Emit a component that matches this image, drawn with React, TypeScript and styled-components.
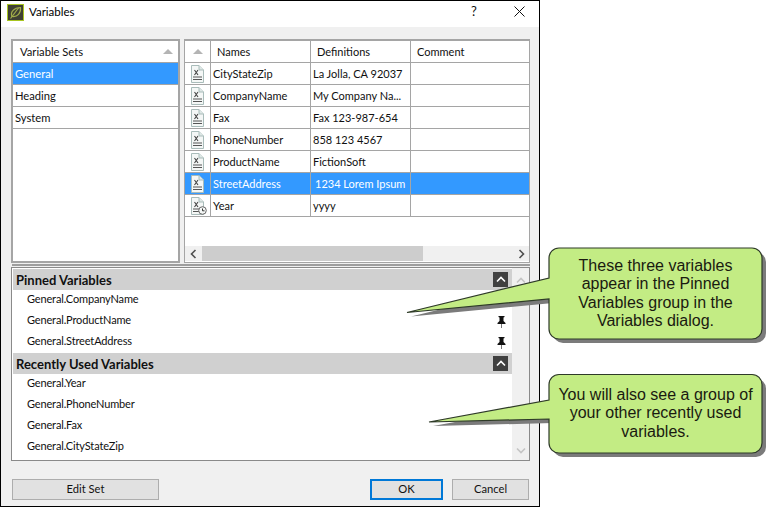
import React from 'react';
import styled, { createGlobalStyle } from 'styled-components';

const GlobalStyle = createGlobalStyle`
  html, body {
    margin: 0;
    padding: 0;
    background: #ffffff;
  }
  #root {
    width: 777px;
    height: 507px;
    overflow: hidden;
  }
  * {
    box-sizing: border-box;
  }
`;

const uiFont = 'Lato, Roboto, sans-serif';
const lineColor = '#a5a5a5';
const selectedColor = '#3399ff';

const Page = styled.div`
  position: relative;
  width: 777px;
  height: 507px;
  background: #ffffff;
  font-family: ${uiFont};
  font-size: 11.2px;
  color: #101010;
`;

const Window = styled.div`
  width: 540px;
  height: 507px;
  border: 1px solid #000000;
  display: flex;
  flex-direction: column;
  background: #f0f0f0;
`;

const TitleBar = styled.div`
  height: 26px;
  flex: none;
  background: #ffffff;
  display: flex;
  align-items: center;
  padding: 0 0 4px 6px;
`;

const TitleText = styled.span`
  margin: 0 0 2px 5px;
  font-size: 11.5px;
  color: #000000;
  flex: 1;
`;

const TitleButton = styled.span<{ $width: number }>`
  width: ${(props) => props.$width}px;
  margin-bottom: 2px;
  display: flex;
  justify-content: center;
  align-items: center;
  font-size: 13px;
  color: #111111;
`;

const Body = styled.div`
  flex: 1;
  display: flex;
  flex-direction: column;
  padding: 12px 9px 0 10px;
`;

const TopRow = styled.div`
  height: 224px;
  flex: none;
  display: flex;
  gap: 4px;
`;

const Panel = styled.div<{ $width: number; $thinSides?: boolean }>`
  width: ${(props) => props.$width}px;
  flex: none;
  border: 2px solid ${lineColor};
  border-left-width: ${(props) => (props.$thinSides ? 1 : 2)}px;
  border-right-width: ${(props) => (props.$thinSides ? 1 : 2)}px;
  border-bottom-width: ${(props) => (props.$thinSides ? 1 : 2)}px;
  background: #ffffff;
  display: flex;
  flex-direction: column;
`;

const SetsHeader = styled.div`
  height: 22px;
  flex: none;
  display: flex;
  align-items: center;
  justify-content: space-between;
  padding: 0 5px 0 7px;
  border-bottom: 1px solid ${lineColor};
`;

const SortArrow = styled.span`
  width: 0;
  height: 0;
  border-left: 5px solid transparent;
  border-right: 5px solid transparent;
  border-bottom: 5px solid #b4b4b4;
`;

const SetRow = styled.div<{ $selected?: boolean }>`
  height: 22px;
  flex: none;
  display: flex;
  align-items: center;
  padding-left: 2px;
  border-bottom: 1px solid ${lineColor};
  background: ${(props) => (props.$selected ? selectedColor : '#ffffff')};
  color: ${(props) => (props.$selected ? '#ffffff' : '#101010')};
`;

const TableRow = styled.div<{ $selected?: boolean }>`
  height: 22px;
  flex: none;
  display: grid;
  grid-template-columns: 26px 100px 100px 1fr;
  font-size: 11px;
  border-bottom: 1px solid ${lineColor};
  background: ${(props) => (props.$selected ? selectedColor : '#ffffff')};
  color: ${(props) => (props.$selected ? '#ffffff' : '#101010')};
`;

const Cell = styled.div<{ $inset?: number }>`
  display: flex;
  align-items: center;
  min-width: 0;
  white-space: nowrap;
  overflow: hidden;
  padding-left: ${(props) => props.$inset ?? 2}px;
  border-right: 1px solid ${lineColor};
  &:last-child {
    border-right: none;
  }
`;

const IconCell = styled(Cell)`
  justify-content: center;
  padding-left: 1px;
`;

const TableSpacer = styled.div`
  flex: 1;
`;

const HScrollBar = styled.div`
  height: 15px;
  flex: none;
  margin-bottom: 1px;
  background: #f0f0f0;
  display: flex;
  align-items: center;
`;

const ScrollArrow = styled.span`
  width: 17px;
  height: 15px;
  flex: none;
  display: flex;
  align-items: center;
  justify-content: center;
`;

const HScrollTrack = styled.div`
  flex: 1;
  height: 15px;
`;

const HScrollThumb = styled.div`
  width: 221px;
  height: 15px;
  background: #cdcdcd;
`;

const Splitter = styled.div`
  height: 4px;
  flex: none;
  margin: 0 0 0 1px;
  padding: 0.5px 0;
  background-image: repeating-conic-gradient(#3c3c3c 0 25%, #ffffff 0 50%);
  background-size: 2px 2px;
  background-clip: content-box;
  border-bottom: 1px solid #f0f0f0;
`;

const LowerPanel = styled.div`
  height: 194px;
  flex: none;
  border: 1px solid #8a8a8a;
  background: #ffffff;
  display: flex;
`;

const GroupList = styled.div`
  flex: 1;
  padding: 1px 0 0 1px;
  min-width: 0;
`;

const GroupHeader = styled.div`
  height: 21px;
  background: #d0d0d0;
  display: flex;
  align-items: center;
  justify-content: space-between;
  padding: 0 4px 0 3px;
  font-weight: 700;
  font-size: 13px;
  color: #111111;
`;

const CollapseButton = styled.span`
  width: 15px;
  height: 15px;
  background: #404040;
  display: flex;
  align-items: center;
  justify-content: center;
`;

const VariableRow = styled.div`
  height: 21px;
  display: flex;
  align-items: center;
  justify-content: space-between;
  padding: 0 6px 5px 14px;
  font-size: 11px;
  letter-spacing: -0.15px;
`;

const PinSlot = styled.span`
  display: flex;
  margin-top: 6px;
`;

const VScrollBar = styled.div`
  width: 17px;
  flex: none;
  background: #f0f0f0;
  display: flex;
  flex-direction: column;
  justify-content: space-between;
  align-items: center;
  padding: 8px 0 5px;
`;

const Footer = styled.div`
  flex: 1;
  display: flex;
  align-items: flex-start;
  padding: 18px 1px 0 1px;
  gap: 9px;
`;

const Button = styled.button<{ $width: number; $primary?: boolean }>`
  width: ${(props) => props.$width}px;
  height: 21px;
  padding: 0 0 2px;
  font-family: ${uiFont};
  font-size: 11.2px;
  color: #111111;
  background: #e1e1e1;
  border: ${(props) => (props.$primary ? '2px solid #0078d7' : '1px solid #adadad')};
`;

const FooterSpacer = styled.div`
  flex: 1;
`;

const CalloutArt = styled.svg<{ $left: number; $top: number }>`
  position: absolute;
  left: ${(props) => props.$left}px;
  top: ${(props) => props.$top}px;
`;

const CalloutText = styled.div<{ $top: number; $height: number }>`
  position: absolute;
  left: 549px;
  top: ${(props) => props.$top}px;
  width: 213px;
  height: ${(props) => props.$height}px;
  display: flex;
  align-items: center;
  justify-content: center;
  text-align: center;
  font-family: "Liberation Sans", Arial, sans-serif;
  font-size: 16px;
  line-height: 18.3px;
  color: #1a1a10;
`;

const Logo = (): React.ReactElement => (
  <svg width='17' height='17' viewBox='0 0 17 17'>
    <rect x='0.5' y='0.5' width='16' height='16' fill='#3f3f33' stroke='#a8c520' />
    <path d='M5 12.5 C3 8 7 3.5 13.5 3.5 C14 9 10.5 13.5 5 12.5 Z' fill='none' stroke='#a3ad4a' strokeWidth='1.2' />
    <path d='M3.5 14.5 L11.5 4' stroke='#a3ad4a' strokeWidth='1.2' />
  </svg>
);

const VariableIcon = ({ isRecent }: { isRecent?: boolean }): React.ReactElement => (
  <svg width='18' height='18' viewBox='0 0 18 18'>
    <path d='M2.5 0.5 H10 L14.5 5 V17.5 H2.5 Z' fill='#f4f7f6' stroke='#a9bcba' />
    <path d='M10 0.5 V5 H14.5' fill='#dfe8e6' stroke='#a9bcba' />
    <path d='M5.5 5 L9 10 M9 5 L5.5 10' stroke='#444444' strokeWidth='1.1' />
    <path d='M4 12 H13 M4 14.5 H13' stroke='#555555' strokeWidth='1' />
    {isRecent && (
      <g>
        <circle cx='13.5' cy='13.5' r='3.8' fill='#f4f7f6' stroke='#666666' />
        <path d='M13.5 11.5 V13.8 H15.5' stroke='#333333' fill='none' />
      </g>
    )}
  </svg>
);

const Pin = (): React.ReactElement => (
  <PinSlot>
    <svg width='9' height='12' viewBox='0 0 9 12'>
      <path d='M1.5 0 H7.5 V1 L6.5 1.5 V5 L8.5 7 V8 H0.5 V7 L2.5 5 V1.5 L1.5 1 Z' fill='#111111' />
      <path d='M4.5 8 V12' stroke='#777777' />
    </svg>
  </PinSlot>
);

const Chevron = ({ direction, color, width }: { direction: 'left' | 'right' | 'up' | 'down'; color: string; width: number }): React.ReactElement => {
  const paths = {
    left: 'M6.5 1 L2.5 5 L6.5 9',
    right: 'M3.5 1 L7.5 5 L3.5 9',
    up: 'M1 6.5 L5 2.5 L9 6.5',
    down: 'M1 3.5 L5 7.5 L9 3.5',
  };
  return (
    <svg width='10' height='10' viewBox='0 0 10 10'>
      <path d={paths[direction]} fill='none' stroke={color} strokeWidth={width} />
    </svg>
  );
};

const tableRows = [
  { name: 'CityStateZip', definition: 'La Jolla, CA 92037' },
  { name: 'CompanyName', definition: 'My Company Na...' },
  { name: 'Fax', definition: 'Fax 123-987-654' },
  { name: 'PhoneNumber', definition: '858 123 4567' },
  { name: 'ProductName', definition: 'FictionSoft' },
  { name: 'StreetAddress', definition: '1234 Lorem Ipsum', isSelected: true },
  { name: 'Year', definition: 'yyyy', isRecent: true },
];

const variableSets = ['General', 'Heading', 'System'];
const pinnedVariables = [
  { name: 'General.CompanyName' },
  { name: 'General.ProductName', isPinned: true },
  { name: 'General.StreetAddress', isPinned: true },
];
const recentVariables = ['General.Year', 'General.PhoneNumber', 'General.Fax', 'General.CityStateZip'];

const calloutOne = 'M559 248 H752 A10 10 0 0 1 762 258 V329 A10 10 0 0 1 752 339 H559 A10 10 0 0 1 549 329 V299 L407 312.5 L549 278 V258 A10 10 0 0 1 559 248 Z';
const calloutTwo = 'M559 374.5 H752 A10 10 0 0 1 762 384.5 V443 A10 10 0 0 1 752 453 H559 A10 10 0 0 1 549 443 V419 L429 422 L549 400 V384.5 A10 10 0 0 1 559 374.5 Z';

const Callout = ({ path, top, height }: { path: string; top: number; height: number }): React.ReactElement => (
  <CalloutArt $left={400} $top={top} width='377' height={height} viewBox={`400 ${top} 377 ${height}`}>
    <path d={path} fill='#7b7b7b' transform='translate(4 4)' />
    <path d={path} fill='#c3ec84' stroke='#2e3a28' strokeWidth='1.2' />
  </CalloutArt>
);

export default function App(): React.ReactElement {
  return (
    <Page>
      <GlobalStyle />
      <Window>
        <TitleBar>
          <Logo />
          <TitleText>Variables</TitleText>
          <TitleButton $width={50}>?</TitleButton>
          <TitleButton $width={40}>
            <svg width='11' height='11' viewBox='0 0 11 11'>
              <path d='M0.5 0.5 L10.5 10.5 M10.5 0.5 L0.5 10.5' stroke='#111111' strokeWidth='1' />
            </svg>
          </TitleButton>
        </TitleBar>
        <Body>
          <TopRow>
            <Panel $width={169}>
              <SetsHeader>
                <span>Variable Sets</span>
                <SortArrow />
              </SetsHeader>
              {variableSets.map((setName, index) => (
                <SetRow key={setName} $selected={index === 0}>{setName}</SetRow>
              ))}
            </Panel>
            <Panel $width={346} $thinSides={true}>
              <TableRow>
                <IconCell><SortArrow /></IconCell>
                <Cell $inset={6}>Names</Cell>
                <Cell $inset={6}>Definitions</Cell>
                <Cell $inset={6}>Comment</Cell>
              </TableRow>
              {tableRows.map((row) => (
                <TableRow key={row.name} $selected={row.isSelected}>
                  <IconCell><VariableIcon isRecent={row.isRecent} /></IconCell>
                  <Cell>{row.name}</Cell>
                  <Cell $inset={row.isSelected ? 4 : 2}>{row.definition}</Cell>
                  <Cell />
                </TableRow>
              ))}
              <TableSpacer />
              <HScrollBar>
                <ScrollArrow><Chevron direction='left' color='#505050' width={1.6} /></ScrollArrow>
                <HScrollTrack><HScrollThumb /></HScrollTrack>
                <ScrollArrow><Chevron direction='right' color='#505050' width={1.6} /></ScrollArrow>
              </HScrollBar>
            </Panel>
          </TopRow>
          <Splitter />
          <LowerPanel>
            <GroupList>
              <GroupHeader>
                Pinned Variables
                <CollapseButton><Chevron direction='up' color='#ffffff' width={1.6} /></CollapseButton>
              </GroupHeader>
              {pinnedVariables.map((variable) => (
                <VariableRow key={variable.name}>
                  {variable.name}
                  {variable.isPinned && <Pin />}
                </VariableRow>
              ))}
              <GroupHeader>
                Recently Used Variables
                <CollapseButton><Chevron direction='up' color='#ffffff' width={1.6} /></CollapseButton>
              </GroupHeader>
              {recentVariables.map((name) => (
                <VariableRow key={name}>{name}</VariableRow>
              ))}
            </GroupList>
            <VScrollBar>
              <Chevron direction='up' color='#c4c4c4' width={1.6} />
              <Chevron direction='down' color='#c4c4c4' width={1.6} />
            </VScrollBar>
          </LowerPanel>
          <Footer>
            <Button $width={147}>Edit Set</Button>
            <FooterSpacer />
            <Button $width={73} $primary={true}>OK</Button>
            <Button $width={77}>Cancel</Button>
          </Footer>
        </Body>
      </Window>
      <Callout path={calloutOne} top={240} height={110} />
      <CalloutText $top={248} $height={91}>
        <span>These three variables<br />appear in the Pinned<br />Variables group in the<br />Variables dialog.</span>
      </CalloutText>
      <Callout path={calloutTwo} top={365} height={100} />
      <CalloutText $top={374} $height={79}>
        <span>You will also see a group of<br />your other recently used<br />variables.</span>
      </CalloutText>
    </Page>
  );
}
